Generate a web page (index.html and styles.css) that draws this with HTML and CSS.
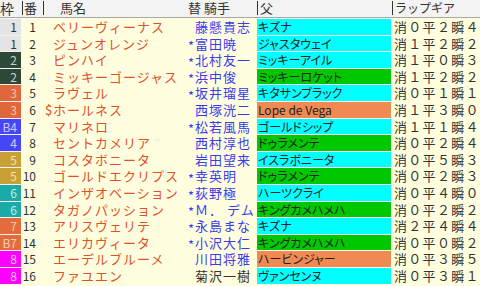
FILE: index.html
```html
<!DOCTYPE html>
<html lang="ja">
<head>
<meta charset="utf-8">
<title>出馬表</title>
<link rel="stylesheet" href="styles.css">
</head>
<body>
<div class="sheet">
  <div class="row head">
    <div class="h h-waku">枠</div>
    <div class="h h-ban">番</div>
    <div class="h h-name">馬名</div>
    <div class="h h-jockey">替 騎手</div>
    <div class="h h-sire">父</div>
    <div class="h h-lap">ラップギア</div>
  </div>
  <div class="body">
    <div class="row"><div class="waku w1">1</div><div class="ban">1</div><div class="name"><span class="mark"></span>ベリーヴィーナス</div><div class="jockey"><span class="chg"></span>藤懸貴志</div><div class="sire cyan">キズナ</div><div class="lap">消０平２瞬４</div></div>
    <div class="row"><div class="waku w1">1</div><div class="ban">2</div><div class="name"><span class="mark"></span>ジュンオレンジ</div><div class="jockey"><span class="chg">*</span>富田暁</div><div class="sire cyan">ジャスタウェイ</div><div class="lap">消１平２瞬２</div></div>
    <div class="row"><div class="waku w2">2</div><div class="ban">3</div><div class="name"><span class="mark"></span>ピンハイ</div><div class="jockey"><span class="chg">*</span>北村友一</div><div class="sire cyan">ミッキーアイル</div><div class="lap">消１平０瞬３</div></div>
    <div class="row"><div class="waku w2">2</div><div class="ban">4</div><div class="name"><span class="mark"></span>ミッキーゴージャス</div><div class="jockey"><span class="chg">*</span>浜中俊</div><div class="sire green">ミッキーロケット</div><div class="lap">消１平２瞬２</div></div>
    <div class="row"><div class="waku w3">3</div><div class="ban">5</div><div class="name"><span class="mark"></span>ラヴェル</div><div class="jockey"><span class="chg">*</span>坂井瑠星</div><div class="sire cyan">キタサンブラック</div><div class="lap">消０平１瞬１</div></div>
    <div class="row"><div class="waku w3">3</div><div class="ban">6</div><div class="name"><span class="mark">$</span>ホールネス</div><div class="jockey"><span class="chg"></span>西塚洸二</div><div class="sire orange">Lope de Vega</div><div class="lap">消１平３瞬０</div></div>
    <div class="row"><div class="waku w4">B4</div><div class="ban">7</div><div class="name"><span class="mark"></span>マリネロ</div><div class="jockey"><span class="chg">*</span>松若風馬</div><div class="sire cyan">ゴールドシップ</div><div class="lap">消１平１瞬４</div></div>
    <div class="row"><div class="waku w4">4</div><div class="ban">8</div><div class="name"><span class="mark"></span>セントカメリア</div><div class="jockey"><span class="chg"></span>西村淳也</div><div class="sire green">ドゥラメンテ</div><div class="lap">消０平２瞬４</div></div>
    <div class="row"><div class="waku w5">5</div><div class="ban">9</div><div class="name"><span class="mark"></span>コスタボニータ</div><div class="jockey"><span class="chg"></span>岩田望来</div><div class="sire cyan">イスラボニータ</div><div class="lap">消０平５瞬３</div></div>
    <div class="row"><div class="waku w5">5</div><div class="ban">10</div><div class="name"><span class="mark"></span>ゴールドエクリプス</div><div class="jockey"><span class="chg">*</span>幸英明</div><div class="sire green">ドゥラメンテ</div><div class="lap">消０平２瞬３</div></div>
    <div class="row"><div class="waku w6">6</div><div class="ban">11</div><div class="name"><span class="mark"></span>インザオベーション</div><div class="jockey"><span class="chg">*</span>荻野極</div><div class="sire cyan">ハーツクライ</div><div class="lap">消０平４瞬０</div></div>
    <div class="row"><div class="waku w6">6</div><div class="ban">12</div><div class="name"><span class="mark"></span>タガノパッション</div><div class="jockey"><span class="chg">*</span>Ｍ． デム</div><div class="sire green">キングカメハメハ</div><div class="lap">消０平２瞬２</div></div>
    <div class="row"><div class="waku w7">7</div><div class="ban">13</div><div class="name"><span class="mark"></span>アリスヴェリテ</div><div class="jockey"><span class="chg">*</span>永島まな</div><div class="sire cyan">キズナ</div><div class="lap">消２平４瞬４</div></div>
    <div class="row"><div class="waku w7">B7</div><div class="ban">14</div><div class="name"><span class="mark"></span>エリカヴィータ</div><div class="jockey"><span class="chg">*</span>小沢大仁</div><div class="sire green">キングカメハメハ</div><div class="lap">消０平０瞬２</div></div>
    <div class="row"><div class="waku w8">8</div><div class="ban">15</div><div class="name"><span class="mark"></span>エーデルブルーメ</div><div class="jockey"><span class="chg"></span>川田将雅</div><div class="sire orange">ハービンジャー</div><div class="lap">消０平３瞬５</div></div>
    <div class="row"><div class="waku w8">8</div><div class="ban">16</div><div class="name"><span class="mark"></span>ファユエン</div><div class="jockey dark"><span class="chg"></span>菊沢一樹</div><div class="sire cyan">ヴァンセンヌ</div><div class="lap">消０平３瞬１</div></div>
  </div>
</div>
</body>
</html>
```
FILE: styles.css
```css
html, body {
  margin: 0;
  padding: 0;
}
body {
  width: 480px;
  height: 286px;
  overflow: hidden;
  background: #ffffe0;
  font-family: "Noto Sans CJK JP", "Noto Sans", sans-serif;
  color: #333;
}
.sheet {
  width: 480px;
}
.row {
  display: grid;
  grid-template-columns: 22px 22px 142px 71px 135px 88px;
}
.head {
  height: 17px;
  background: #f3f3f3;
  border-bottom: 1px solid #a8a8a8;
}
.h {
  font-size: 13px;
  line-height: 14px;
  height: 14px;
  margin-top: 1px;
  white-space: nowrap;
  color: #333;
}
.h-waku { padding-left: 0; font-size: 14px; }
.h-ban {
  border-left: 1px solid #333;
  border-right: 1px solid #333;
  padding-left: 1px;
}
.h-name { padding-left: 16px; }
.h-jockey { padding-left: 2px; }
.h-sire { border-left: 1px solid #333; padding-left: 2px; }
.h-lap { border-left: 1px solid #333; padding-left: 2px; font-size: 12px; }

.body .row {
  height: 16.6px;
}
.body .row > div {
  line-height: 15.6px;
  white-space: nowrap;
  overflow: hidden;
  border-top: 1px solid transparent;
}
.waku {
  margin-right: 1px;
  text-align: right;
  padding-right: 4px;
  font-size: 12px;
  color: #e8e8e8;
}
.body .row > .waku,
.body .row > .sire {
  border-top-color: #f4f4f0;
}
.w1 { background: #e4e4e4; color: #333; }
.w2 { background: #2e4838; color: #c8d2c8; }
.w3 { background: #e0663c; color: #f6c8b0; }
.w4 { background: #4646f6; color: #c8c8ff; }
.w5 { background: #c8a038; color: #f2e2b4; }
.w6 { background: #1caaa8; color: #c0eeee; }
.w7 { background: #e46c3c; color: #f8cbb4; }
.w8 { background: #ff00ff; color: #ffc8ff; }

.ban {
  text-align: right;
  padding-right: 8px;
  font-size: 12px;
  color: #333;
}
.name {
  padding-left: 1px;
  font-size: 13px;
  letter-spacing: 1px;
  color: #e0502a;
}
.mark {
  display: inline-block;
  width: 8px;
  letter-spacing: 0;
}
.jockey {
  padding-left: 2px;
  font-size: 13px;
  letter-spacing: 1px;
  color: #3a3af0;
}
.jockey.dark { color: #333; }
.chg {
  display: inline-block;
  width: 7px;
  letter-spacing: 0;
  vertical-align: -0.2em;
}
.sire {
  margin-right: 1px;
  padding-left: 1px;
  font-size: 12px;
  font-feature-settings: "palt";
  color: #222;
}
.cyan { background: #00ffff; }
.green { background: #00c800; }
.orange { background: #f08a52; }
.lap {
  padding-left: 2px;
  font-size: 13px;
  letter-spacing: 1.3px;
  color: #333;
}
```
